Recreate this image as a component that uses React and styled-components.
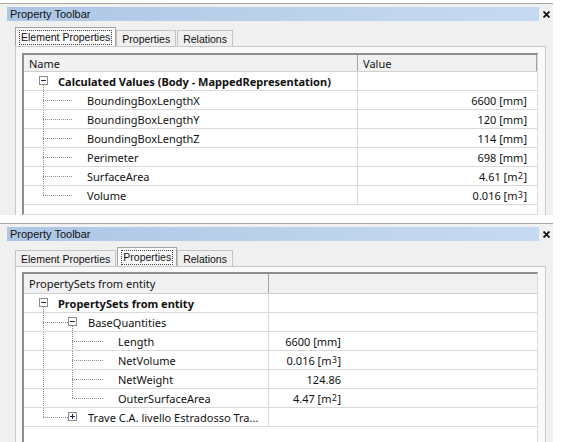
import React from 'react';
import styled, { createGlobalStyle } from 'styled-components';

const GlobalStyle = createGlobalStyle`
  html, body {
    margin: 0;
    padding: 0;
    background: #fff;
  }
  body {
    font-family: "Liberation Sans", Arial, sans-serif;
  }
`;

const Page = styled.div`
  width: 565px;
  height: 442px;
  overflow: hidden;
  display: flex;
  flex-direction: column;
  gap: 8px;
  padding-top: 3px;
  box-sizing: border-box;
`;

const Panel = styled.section`
  width: 553px;
  height: ${p => p.$height}px;
  flex-shrink: 0;
  box-sizing: border-box;
  border-top: 1px solid #a9a9a9;
  background: #f0f0f0;
  padding: 3px 0 0 7px;
  display: flex;
  flex-direction: column;
  overflow: hidden;
`;

const TitleRow = styled.div`
  display: flex;
  align-items: center;
  height: 14px;
`;

const TitleBar = styled.div`
  width: 532px;
  height: 14px;
  box-sizing: border-box;
  padding-left: 3px;
  background: linear-gradient(to right, #acc6e5, #bcd2eb 55%, #c6dbf1);
  font-size: 11px;
  line-height: 14px;
  color: #111;
`;

const CloseButton = styled.div`
  width: 14px;
  display: flex;
  align-items: center;
  justify-content: center;
`;

const TabStrip = styled.div`
  display: flex;
  align-items: flex-end;
  height: ${p => p.$height}px;
  margin: ${p => p.$gap}px 0 0 8px;
`;

const Tab = styled.div`
  height: ${p => (p.$active ? 19 : 16)}px;
  box-sizing: border-box;
  border: 1px solid ${p => (p.$active ? '#a2a2a2' : '#c4c4c4')};
  border-bottom: none;
  background: ${p => (p.$active ? '#fbfbfb' : '#f0f0f0')};
  padding: ${p => (p.$active ? '2px 3px 0' : '1px 3px 0')};
  margin-right: ${p => (p.$active ? 0 : 1)}px;
  font-size: 10.5px;
  color: #111;
`;

const TabLabel = styled.span`
  display: inline-block;
  padding: 0 1px;
  line-height: 13px;
  border: 1px ${p => (p.$focused ? 'dotted #444' : 'solid transparent')};
`;

const TabPage = styled.div`
  flex: 1;
  width: 531px;
  margin-left: 8px;
  box-sizing: border-box;
  border: 1px solid #c9c9c9;
  border-bottom: none;
  background: #f9f9f9;
  padding: ${p => p.$top}px 7px 0 6px;
`;

const Grid = styled.div`
  height: ${p => p.$height}px;
  box-sizing: border-box;
  background: #fff;
  border-top: 2px solid #8d8d8d;
  border-left: 2px solid #8d8d8d;
  border-right: 1px solid #dadada;
  border-bottom: 1px solid #dadada;
  font-family: "Noto Sans", "Open Sans", sans-serif;
  font-size: 11px;
  color: #111;
  overflow: hidden;
`;

const HeaderRow = styled.div`
  display: grid;
  grid-template-columns: ${p => p.$cols};
  height: ${p => p.$height}px;
  box-sizing: border-box;
  background: #f1f1f1;
  border-bottom: 1px solid #cfcfcf;
`;

const HeaderCell = styled.div`
  grid-column: ${p => (p.$span ? '2 / -1' : 'auto')};
  display: flex;
  align-items: center;
  padding-left: 5px;
  border-right: 1px solid ${p => (p.$span ? 'transparent' : '#a3a3a3')};
`;

const Row = styled.div`
  display: grid;
  grid-template-columns: ${p => p.$cols};
  height: 19px;
  box-sizing: border-box;
  border-bottom: 1px solid #d9d9d9;
`;

const NameCell = styled.div`
  display: flex;
  align-items: center;
  border-right: 1px solid #d9d9d9;
  font-weight: ${p => (p.$bold ? 700 : 400)};
  white-space: nowrap;
  overflow: hidden;
`;

const ValueCell = styled.div`
  display: flex;
  align-items: center;
  justify-content: flex-end;
  padding-right: ${p => p.$pad}px;
  white-space: nowrap;
`;

const Filler = styled.div``;

const Sup = styled.sup`
  font-size: 8.5px;
  line-height: 0;
  vertical-align: 4px;
  margin: 0 0.5px;
`;

const Guides = styled.svg`
  flex-shrink: 0;
  display: block;
  overflow: visible;
`;

const dotted = { stroke: '#8c8c8c', strokeWidth: 1, strokeDasharray: '1 1' };

function TreeGuides({ width, lines = [], box }) {
  return (
    <Guides width={width} height={18}>
      {lines.map((l, i) => {
        const x = l.x + 0.5;
        if (l.kind === 'pass' || l.kind === 'tee') return <line key={i} x1={x} y1={0} x2={x} y2={19} style={dotted} />;
        if (l.kind === 'start') return <line key={i} x1={x} y1={13} x2={x} y2={19} style={dotted} />;
        if (l.kind === 'end') return <line key={i} x1={x} y1={0} x2={x} y2={9} style={dotted} />;
        if (l.kind === 'h') return <line key={i} x1={l.x} y1={9.5} x2={l.to} y2={9.5} style={dotted} />;
        return null;
      })}
      {box && (
        <g>
          <rect x={box.x - 4 + 0.5} y={4.5} width={8} height={8} fill="#fff" stroke="#8a8a8a" />
          <line x1={box.x - 2} y1={8.5} x2={box.x + 3} y2={8.5} stroke="#1c2a50" />
          {box.sign === '+' && <line x1={box.x + 0.5} y1={6} x2={box.x + 0.5} y2={11} stroke="#1c2a50" />}
        </g>
      )}
    </Guides>
  );
}

const m2 = n => (
  <>
    {n} [m<Sup>2</Sup>]
  </>
);
const m3 = n => (
  <>
    {n} [m<Sup>3</Sup>]
  </>
);

const child1 = [{ x: 19, kind: 'tee' }, { x: 19, kind: 'h', to: 49 }];
const last1 = [{ x: 19, kind: 'end' }, { x: 19, kind: 'h', to: 49 }];

const elementRows = [
  { name: 'Calculated Values (Body - MappedRepresentation)', bold: true, indent: 34, lines: [{ x: 19, kind: 'start' }], box: { x: 19, sign: '-' } },
  { name: 'BoundingBoxLengthX', value: '6600 [mm]', indent: 63, lines: child1 },
  { name: 'BoundingBoxLengthY', value: '120 [mm]', indent: 63, lines: child1 },
  { name: 'BoundingBoxLengthZ', value: '114 [mm]', indent: 63, lines: child1 },
  { name: 'Perimeter', value: '698 [mm]', indent: 63, lines: child1 },
  { name: 'SurfaceArea', value: m2('4.61'), indent: 63, lines: child1 },
  { name: 'Volume', value: m3('0.016'), indent: 63, lines: last1 },
];

const child2 = [{ x: 19, kind: 'pass' }, { x: 48, kind: 'tee' }, { x: 48, kind: 'h', to: 79 }];
const last2 = [{ x: 19, kind: 'pass' }, { x: 48, kind: 'end' }, { x: 48, kind: 'h', to: 79 }];

const propertyRows = [
  { name: 'PropertySets from entity', bold: true, indent: 34, lines: [{ x: 19, kind: 'start' }], box: { x: 19, sign: '-' } },
  { name: 'BaseQuantities', indent: 64, lines: [{ x: 19, kind: 'tee' }, { x: 19, kind: 'h', to: 44 }, { x: 48, kind: 'start' }], box: { x: 48, sign: '-' } },
  { name: 'Length', value: '6600 [mm]', indent: 94, lines: child2 },
  { name: 'NetVolume', value: m3('0.016'), indent: 94, lines: child2 },
  { name: 'NetWeight', value: '124.86', indent: 94, lines: child2 },
  { name: 'OuterSurfaceArea', value: m2('4.47'), indent: 94, lines: last2 },
  { name: 'Trave C.A. livello Estradosso Tra...', indent: 64, lines: [{ x: 19, kind: 'end' }, { x: 19, kind: 'h', to: 44 }], box: { x: 48, sign: '+' } },
];

function CloseIcon() {
  return (
    <svg width="7" height="7" viewBox="0 0 7 7">
      <path d="M0.5 0.5 L6.5 6.5 M6.5 0.5 L0.5 6.5" stroke="#111" strokeWidth="1.8" />
    </svg>
  );
}

function ToolbarPanel({ height, activeTab, tabGap, pageTop, gridHeight, headerHeight, cols, headers, rows, valuePad, filler }) {
  const tabs = ['Element Properties', 'Properties', 'Relations'];
  return (
    <Panel $height={height}>
      <TitleRow>
        <TitleBar>Property Toolbar</TitleBar>
        <CloseButton>
          <CloseIcon />
        </CloseButton>
      </TitleRow>
      <TabStrip $height={19} $gap={tabGap}>
        {tabs.map(t => (
          <Tab key={t} $active={t === activeTab}>
            <TabLabel $focused={t === activeTab}>{t}</TabLabel>
          </Tab>
        ))}
      </TabStrip>
      <TabPage $top={pageTop}>
        <Grid $height={gridHeight}>
          <HeaderRow $cols={cols} $height={headerHeight}>
            {headers.map((h, i) => (
              <HeaderCell key={i} $span={i > 0 && filler}>{h}</HeaderCell>
            ))}
          </HeaderRow>
          {rows.map(r => (
            <Row key={r.name} $cols={cols}>
              <NameCell $bold={r.bold}>
                <TreeGuides width={r.indent} lines={r.lines} box={r.box} />
                {r.name}
              </NameCell>
              <ValueCell $pad={valuePad}>{r.value}</ValueCell>
              {filler && <Filler />}
            </Row>
          ))}
        </Grid>
      </TabPage>
    </Panel>
  );
}

export default function App() {
  return (
    <>
      <GlobalStyle />
      <Page>
        <ToolbarPanel
          height={212}
          activeTab="Element Properties"
          tabGap={6}
          pageTop={6}
          gridHeight={162}
          headerHeight={17}
          cols="334px 1fr"
          headers={['Name', 'Value']}
          rows={elementRows}
          valuePad={10}
        />
        <ToolbarPanel
          height={219}
          activeTab="Properties"
          tabGap={6}
          pageTop={5}
          gridHeight={171}
          headerHeight={20}
          cols="245px 77px 1fr"
          headers={['PropertySets from entity', '']}
          rows={propertyRows}
          valuePad={5}
          filler
        />
      </Page>
    </>
  );
}
